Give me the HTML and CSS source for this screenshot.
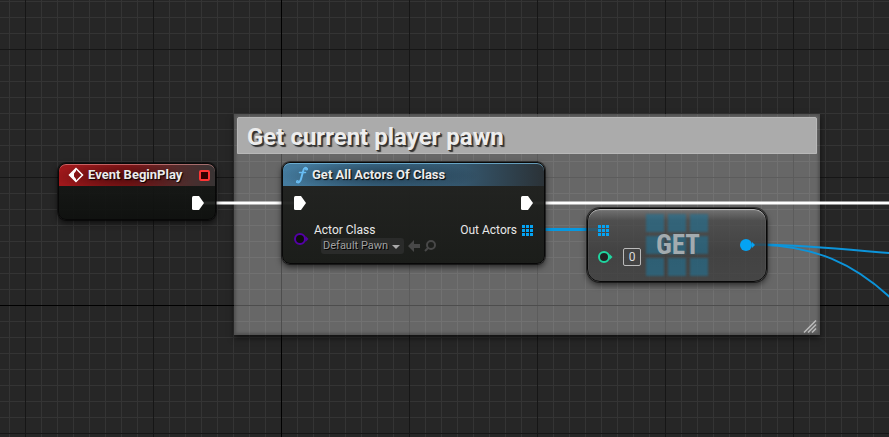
FILE: index.html
```html
<!DOCTYPE html>
<html lang="en">
<head>
<meta charset="utf-8">
<title>Event Graph</title>
<link rel="stylesheet" href="styles.css">
</head>
<body>
<main class="graph">
  <section class="comment">
    <h1 class="comment-title">Get current player pawn</h1>
    <svg class="grip" width="14" height="13" viewBox="0 0 14 13"><path d="M1 12.500 13 .5M5 12.500 13 4.500M9 12.500 13 8.500"/></svg>
  </section>

  <svg class="wires" aria-hidden="true">
    <path class="wire exec" d="M202 203H300M530 203H4000"/>
    <path class="wire array" d="M534 229.500H600"/>
    <path class="wire object" d="M752 244.500C800 244.500 840 249 900 254"/>
    <path class="wire object" d="M752 244.500C812 244.500 856 262 900 307"/>
  </svg>

  <article class="node event">
    <header class="node-head">
      <svg class="diamond" width="16" height="16" viewBox="0 0 16 16"><path d="M8 1.500 14.500 8 8 14.500 1.500 8Z"/><path class="fill" d="M8 1.500V4L6 6.500V9.500L8 12V14.500L1.500 8Z"/></svg>
      <h2>Event BeginPlay</h2>
      <span class="delegate"></span>
    </header>
    <div class="row end">
      <svg class="exec-pin" width="12" height="14" viewBox="0 0 12 14"><path d="M0 1.500Q0 0 1.500 0H7L12 7 7 14H1.500Q0 14 0 12.500Z"/></svg>
    </div>
  </article>

  <article class="node function">
    <header class="node-head">
      <svg class="fn" width="14" height="18" viewBox="0 0 14 18"><path d="M12 3C11 1 9 1.500 8.300 4.500L6 13C5.200 16 3.500 17 2 16"/><path class="bar" d="M4.500 6.500H10.500"/><circle cx="11.500" cy="3" r=".5"/><circle cx="2.500" cy="15.500" r=".5"/></svg>
      <h2>Get All Actors Of Class</h2>
    </header>
    <div class="row">
      <svg class="exec-pin" width="12" height="14" viewBox="0 0 12 14"><path d="M0 1.500Q0 0 1.500 0H7L12 7 7 14H1.500Q0 14 0 12.500Z"/></svg>
      <svg class="exec-pin" width="12" height="14" viewBox="0 0 12 14"><path d="M0 1.500Q0 0 1.500 0H7L12 7 7 14H1.500Q0 14 0 12.500Z"/></svg>
    </div>
    <div class="params">
      <svg class="pin class-pin" width="15" height="12" viewBox="0 0 15 12"><circle cx="6" cy="6" r="5"/><path d="M11.500 3 14.500 6 11.500 9Z"/></svg>
      <div class="param">
        <label for="actor-class">Actor Class</label>
        <div class="picker">
          <span class="select-wrap">
            <select id="actor-class"><option>Default Pawn</option></select>
            <svg class="caret" width="8" height="4" viewBox="0 0 8 4"><path d="M0 0H8L4 4Z"/></svg>
          </span>
          <button type="button" aria-label="Use selected"><svg width="12" height="12" viewBox="0 0 12 12"><path class="solid" d="M0 6 6 0V4H12V8H6V12Z"/></svg></button>
          <button type="button" aria-label="Browse"><svg width="12" height="12" viewBox="0 0 12 12"><circle cx="7" cy="5" r="4"/><path d="M4.500 7.500 1 11"/></svg></button>
        </div>
      </div>
      <div class="output">
        <span>Out Actors</span>
        <svg class="array-pin" width="11" height="11" viewBox="0 0 11 11"><path d="M0 0h3v3H0zM4 0h3v3H4zM8 0h3v3H8zM0 4h3v3H0zM4 4h3v3H4zM8 4h3v3H8zM0 8h3v3H0zM4 8h3v3H4zM8 8h3v3H8z"/></svg>
      </div>
    </div>
  </article>

  <article class="node get">
    <svg class="watermark" width="64" height="64" viewBox="0 0 64 64" aria-hidden="true"><path d="M1 1h18v18H1zM23 1h18v18H23zM45 1h18v18H45zM1 23h18v18H1zM23 23h18v18H23zM45 23h18v18H45zM1 45h18v18H1zM23 45h18v18H23zM45 45h18v18H45z"/></svg>
    <div class="inputs">
      <svg class="array-pin" width="11" height="11" viewBox="0 0 11 11"><path d="M0 0h3v3H0zM4 0h3v3H4zM8 0h3v3H8zM0 4h3v3H0zM4 4h3v3H4zM8 4h3v3H8zM0 8h3v3H0zM4 8h3v3H4zM8 8h3v3H8z"/></svg>
      <div class="index">
        <svg class="pin int-pin" width="15" height="12" viewBox="0 0 15 12"><circle cx="6" cy="6" r="5"/><path d="M11.500 3 14.500 6 11.500 9Z"/></svg>
        <input type="text" value="0" aria-label="Index">
      </div>
    </div>
    <h2 class="get-title">GET</h2>
    <svg class="pin object-pin" width="15" height="12" viewBox="0 0 15 12"><circle cx="6" cy="6" r="6"/><path d="M12 3 15 6 12 9Z"/></svg>
  </article>
</main>
</body>
</html>
```
FILE: styles.css
```css
* {
  box-sizing: border-box;
}

body {
  margin: 0;
  background: #262626;
  color: #e8e8e8;
  font: 12px/16px Roboto, sans-serif;
}

h1,
h2 {
  margin: 0;
}

svg {
  display: block;
  flex: none;
}

.graph {
  position: relative;
  min-height: 100vh;
  overflow: hidden;
  background-color: #262626;
  background-image:
    linear-gradient(90deg, #000 1px, transparent 1px),
    linear-gradient(#000 1px, transparent 1px),
    linear-gradient(90deg, #161616 1px, transparent 1px),
    linear-gradient(#161616 1px, transparent 1px),
    linear-gradient(90deg, #343434 1px, transparent 1px),
    linear-gradient(#343434 1px, transparent 1px);
  background-size: 1024px 1024px, 1024px 1024px, 128px 128px, 128px 128px, 16px 16px, 16px 16px;
  background-position: 281px 0, 0 305px, 25px 0, 0 49px, 9px 0, 0 1px;
}

/* Comment box */
.comment {
  position: absolute;
  left: 234px;
  top: 114px;
  width: 586px;
  height: 221px;
  display: flex;
  flex-direction: column;
  justify-content: space-between;
  padding: 3px 3px 2px;
  background: rgba(255, 255, 255, 0.3);
  box-shadow: inset 0 0 3px 2px rgba(0, 0, 0, 0.22), 0 3px 6px rgba(0, 0, 0, 0.6);
}

.comment-title {
  padding: 4px 9px 0;
  border: 1px solid #b8b8b8;
  border-radius: 2px 2px 0 0;
  background: #ababab;
  color: #ededed;
  font-size: 24px;
  line-height: 31px;
  font-weight: 700;
  text-shadow: 1px 1px 0 #333, 2px 2px 1px #333;
}

.grip {
  align-self: flex-end;
  fill: none;
  stroke: #bbb;
  stroke-width: 1.5;
}

/* Wires */
.wires {
  position: absolute;
  inset: 0;
  width: 100%;
  height: 100%;
}

.wire {
  fill: none;
}

.exec {
  stroke: #fff;
  stroke-width: 3;
}

.array {
  stroke: #0798e0;
  stroke-width: 3;
}

.object {
  stroke: #0c94da;
  stroke-width: 2;
}

/* Nodes */
.node {
  position: absolute;
  border: 1px solid #080808;
  border-radius: 8px;
  background: linear-gradient(rgba(24, 26, 24, 0.9), rgba(14, 16, 14, 0.92));
  box-shadow: 0 0 0 1px rgba(0, 0, 0, 0.5), 0 3px 6px rgba(0, 0, 0, 0.65);
}

.node-head {
  display: flex;
  align-items: center;
  height: 22px;
  border-radius: 7px 7px 0 0;
}

.node-head h2 {
  font-size: 13px;
  line-height: 16px;
  font-weight: 700;
  color: #ececec;
  text-shadow: 1px 1px 1px #000;
}

.row {
  display: flex;
  justify-content: space-between;
  padding: 10px 11px 0;
}

.row.end {
  justify-content: flex-end;
}

.exec-pin {
  fill: #fff;
}

.event {
  left: 58px;
  top: 163px;
  width: 158px;
  height: 57px;
}

.event .node-head {
  gap: 4px;
  padding: 0 5px 0 9px;
  background:
    radial-gradient(ellipse 70px 14px at 64px 13px, rgba(30, 0, 0, 0.5), transparent),
    linear-gradient(90deg, #a0181b, #861719 45%, #552a2a 75%, #383434);
  box-shadow: inset 0 1px 0 rgba(230, 150, 150, 0.6);
}

.diamond {
  fill: none;
  stroke: #fff;
  stroke-width: 1.5;
}

.diamond .fill {
  fill: #fff;
  stroke: none;
}

.delegate {
  width: 11px;
  height: 11px;
  margin-left: auto;
  border: 2px solid #ff3434;
  border-radius: 2px;
  background: #300;
}

.function {
  left: 282px;
  top: 162px;
  width: 263px;
  height: 102px;
  background: linear-gradient(rgba(32, 33, 31, 0.95), rgba(24, 26, 23, 0.96));
}

.function .node-head {
  height: 23px;
  gap: 3px;
  padding: 0 12px;
  background:
    radial-gradient(ellipse 100px 16px at 96px 13px, rgba(15, 25, 35, 0.55), transparent),
    linear-gradient(90deg, #457c9f, #3c6c8b 40%, #34556b 70%, #2b3237);
  box-shadow: inset 0 1px 0 rgba(120, 190, 225, 0.75);
}

.fn {
  fill: none;
  stroke: #68bdf3;
  stroke-width: 2;
  stroke-linecap: round;
}

.fn .bar {
  stroke-width: 1.5;
}

.params {
  display: flex;
  align-items: flex-start;
  padding: 12px 11px 0;
}

.pin {
  fill: rgba(0, 0, 0, 0.5);
  stroke-width: 2;
}

.pin path {
  stroke: none;
}

.class-pin {
  margin-top: 11px;
  stroke: #5400a8;
}

.class-pin path {
  fill: #5400a8;
}

.param {
  margin-left: 5px;
}

.param label {
  display: block;
}

.picker {
  display: flex;
  align-items: center;
  gap: 4px;
  margin-left: 7px;
}

.select-wrap {
  position: relative;
  display: flex;
}

select {
  appearance: none;
  width: 83px;
  height: 16px;
  margin: 0;
  padding: 0 2px;
  border: 0;
  border-radius: 3px;
  background: #2a2b2a;
  color: #a0a0a0;
  font: 11px/16px Roboto, sans-serif;
  text-shadow: 1px 1px 0 #000;
}

.caret {
  position: absolute;
  right: 4px;
  top: 7px;
  fill: #aaa;
  pointer-events: none;
}

button {
  padding: 0;
  border: 0;
  background: none;
}

button svg {
  fill: none;
  stroke: #484848;
  stroke-width: 2;
}

button .solid {
  fill: #484848;
  stroke: none;
}

.output {
  display: flex;
  align-items: center;
  gap: 5px;
  margin-left: auto;
}

.array-pin {
  fill: #04a3f3;
}

/* Compact node */
.get {
  left: 587px;
  top: 208px;
  width: 180px;
  height: 74px;
  display: flex;
  align-items: center;
  justify-content: space-between;
  padding: 0 11px 0 10px;
  border-radius: 13px;
  background: linear-gradient(rgba(120, 120, 120, 0.75), rgba(70, 70, 70, 0.75) 16%, rgba(54, 54, 54, 0.75) 60%, rgba(58, 58, 58, 0.75));
  box-shadow: inset 0 1px 1px rgba(255, 255, 255, 0.5), 0 0 0 1px rgba(0, 0, 0, 0.5), 0 3px 6px rgba(0, 0, 0, 0.6);
}

.watermark {
  position: absolute;
  left: 57px;
  top: 4px;
  fill: rgba(33, 115, 150, 0.6);
  filter: blur(1px);
}

.inputs {
  display: flex;
  flex-direction: column;
  gap: 12px;
}

.index {
  display: flex;
  align-items: center;
  gap: 10px;
}

.int-pin {
  stroke: #1fd6a0;
}

.int-pin path {
  fill: #1fd6a0;
}

input {
  width: 18px;
  height: 18px;
  padding: 0;
  border: 1px solid #bbb;
  border-radius: 2px;
  background: transparent;
  color: #ddd;
  font: 12px/16px Roboto, sans-serif;
  text-align: center;
}

.get-title {
  position: relative;
  margin-right: 25px;
  color: #a3abaf;
  font: 700 27px/32px "Roboto Condensed", Roboto, sans-serif;
}

.object-pin,
.object-pin path {
  fill: #04a3f3;
}
```
